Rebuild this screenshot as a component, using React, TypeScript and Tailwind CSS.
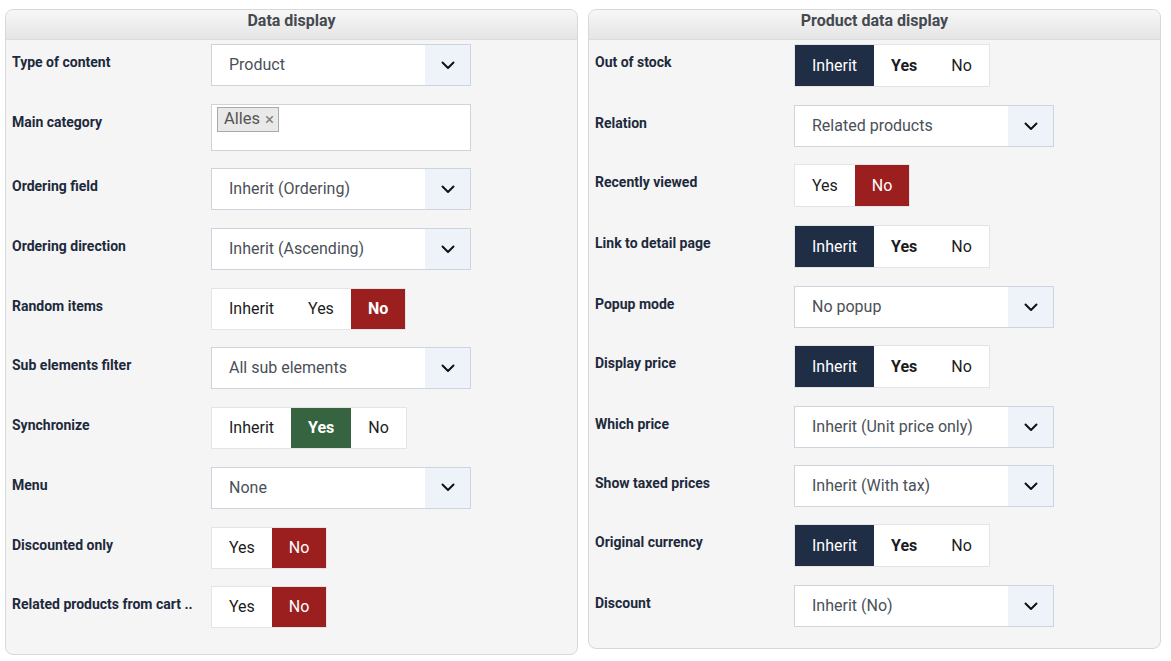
import React from "react";

type Tone = "red" | "green" | "navy";
type Opt = { text: string; on?: Tone; bold?: boolean };
type Field =
  | { kind: "select"; label: string; value: string }
  | { kind: "multi"; label: string; tags: string[] }
  | { kind: "toggle"; label: string; options: Opt[] };

const tones: Record<Tone, string> = {
  red: "bg-[#9c1f1f] text-white",
  green: "bg-[#366340] text-white",
  navy: "bg-[#1f2e45] text-white",
};

const dataDisplay: Field[] = [
  { kind: "select", label: "Type of content", value: "Product" },
  { kind: "multi", label: "Main category", tags: ["Alles"] },
  { kind: "select", label: "Ordering field", value: "Inherit (Ordering)" },
  { kind: "select", label: "Ordering direction", value: "Inherit (Ascending)" },
  {
    kind: "toggle",
    label: "Random items",
    options: [{ text: "Inherit" }, { text: "Yes" }, { text: "No", on: "red", bold: true }],
  },
  { kind: "select", label: "Sub elements filter", value: "All sub elements" },
  {
    kind: "toggle",
    label: "Synchronize",
    options: [{ text: "Inherit" }, { text: "Yes", on: "green", bold: true }, { text: "No" }],
  },
  { kind: "select", label: "Menu", value: "None" },
  {
    kind: "toggle",
    label: "Discounted only",
    options: [{ text: "Yes" }, { text: "No", on: "red" }],
  },
  {
    kind: "toggle",
    label: "Related products from cart ..",
    options: [{ text: "Yes" }, { text: "No", on: "red" }],
  },
];

const inheritYesNo: Opt[] = [
  { text: "Inherit", on: "navy" },
  { text: "Yes", bold: true },
  { text: "No" },
];

const productDisplay: Field[] = [
  { kind: "toggle", label: "Out of stock", options: inheritYesNo },
  { kind: "select", label: "Relation", value: "Related products" },
  {
    kind: "toggle",
    label: "Recently viewed",
    options: [{ text: "Yes" }, { text: "No", on: "red" }],
  },
  { kind: "toggle", label: "Link to detail page", options: inheritYesNo },
  { kind: "select", label: "Popup mode", value: "No popup" },
  { kind: "toggle", label: "Display price", options: inheritYesNo },
  { kind: "select", label: "Which price", value: "Inherit (Unit price only)" },
  { kind: "select", label: "Show taxed prices", value: "Inherit (With tax)" },
  { kind: "toggle", label: "Original currency", options: inheritYesNo },
  { kind: "select", label: "Discount", value: "Inherit (No)" },
];

// per-panel row spacing: the product panel's switch rows sit a touch taller
type Spacing = { select: string; multi: string; toggle: string; toggleH: string };

const compact: Spacing = {
  select: "mb-[17.7px]",
  multi: "mb-[17.7px]",
  toggle: "mb-[17.7px]",
  toggleH: "h-[42px]",
};

const roomy: Spacing = {
  select: "mb-[17px]",
  multi: "mb-[17px]",
  toggle: "mb-[18px]",
  toggleH: "h-[43px]",
};

const Chevron = () => (
  <svg width="14" height="9" viewBox="0 0 14 9" fill="none">
    <path d="M1.5 1.5 7 7l5.5-5.5" stroke="#111" strokeWidth="2" strokeLinecap="round" strokeLinejoin="round" />
  </svg>
);

const Select = ({ value }: { value: string }) => (
  <div className="flex h-[42px] w-[260px] border border-[#cdd4de] bg-white">
    <div className="flex flex-1 items-center pl-[17px] text-[16px] text-[#4a5058]">{value}</div>
    <div className="flex w-[45px] items-center justify-center bg-[#eef3fa]">
      <Chevron />
    </div>
  </div>
);

const Multi = ({ tags }: { tags: string[] }) => (
  <div className="flex h-[47px] w-[260px] items-start gap-1 border border-[#cdd4de] bg-white pl-[5px] pt-[2px]">
    {tags.map((t) => (
      <span
        key={t}
        className="flex h-[25px] items-center gap-[5px] border border-[#a9a9a9] bg-[#e9e9e9] pl-[6px] pr-[4px] text-[16.5px] leading-none text-[#555]"
      >
        {t}
        <span className="text-[17px] text-[#808080]">×</span>
      </span>
    ))}
  </div>
);

const Toggle = ({ options, height }: { options: Opt[]; height: string }) => (
  <div className={`flex ${height} border border-[#e2e4e8] bg-white`}>
    {options.map((o) => (
      <div
        key={o.text}
        className={`flex items-center px-[17px] text-[16px] ${o.on ? tones[o.on] : "text-[#1c1c1c]"} ${
          o.bold ? "font-bold" : ""
        }`}
      >
        {o.text}
      </div>
    ))}
  </div>
);

const Row = ({ field, spacing }: { field: Field; spacing: Spacing }) => (
  <div className={`flex items-start ${spacing[field.kind]}`}>
    <div className="w-[199px] truncate pt-[8px] text-[14px] font-bold leading-[20px] text-[#1d2a3c]">
      {field.label}
    </div>
    {field.kind === "select" && <Select value={field.value} />}
    {field.kind === "multi" && <Multi tags={field.tags} />}
    {field.kind === "toggle" && <Toggle options={field.options} height={spacing.toggleH} />}
  </div>
);

const Panel = ({
  title,
  fields,
  spacing,
  bottom,
}: {
  title: string;
  fields: Field[];
  spacing: Spacing;
  bottom: string;
}) => (
  <section className="w-[573px] overflow-hidden rounded-lg border border-[#d8d8d8] bg-[#f5f5f5]">
    <header className="h-[30px] border-b border-[#dcdcdc] bg-gradient-to-b from-[#f7f7f7] to-[#e5e5e5] pt-[1px] text-center text-[16px] font-bold leading-[20px] text-[#454a50]">
      {title}
    </header>
    <div className={`px-[6px] pt-[4px] ${bottom}`}>
      {fields.map((f) => (
        <Row key={f.label} field={f} spacing={spacing} />
      ))}
    </div>
  </section>
);

export default function App() {
  return (
    <div className="flex h-[661px] items-start gap-[10px] bg-white pl-[5px] pt-[9px] font-['Roboto',sans-serif]">
      <Panel title="Data display" fields={dataDisplay} spacing={compact} bottom="pb-[8px]" />
      <Panel title="Product data display" fields={productDisplay} spacing={roomy} bottom="pb-[4px]" />
    </div>
  );
}
